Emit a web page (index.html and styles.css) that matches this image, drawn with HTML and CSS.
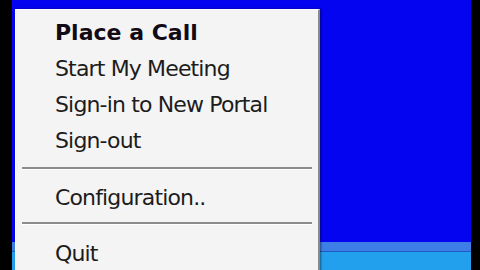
FILE: index.html
```html
<!DOCTYPE html>
<html>
<head>
<meta charset="utf-8">
<link rel="stylesheet" href="styles.css">
</head>
<body>
<div class="screen">
  <div class="desktop">
    <div class="wallpaper"></div>
    <div class="taskbar">
      <div class="tb-top"></div>
      <div class="tb-line"></div>
      <div class="tb-main"></div>
    </div>
  </div>
  <div class="menu">
    <div class="item bold">Place a Call</div>
    <div class="item">Start My Meeting</div>
    <div class="item">Sign-in to New Portal</div>
    <div class="item">Sign-out</div>
    <div class="sep"></div>
    <div class="item">Configuration..</div>
    <div class="sep sep2"></div>
    <div class="item">Quit</div>
  </div>
</div>
</body>
</html>
```

FILE: styles.css
```css
html, body {
  margin: 0;
  padding: 0;
  background: #000;
}
.screen {
  position: relative;
  width: 480px;
  height: 270px;
  overflow: hidden;
  background: #000;
}
.desktop {
  margin-left: 12px;
  width: 459px;
  height: 270px;
  display: flex;
  flex-direction: column;
}
.wallpaper {
  flex: 1;
  background: #0404f0;
}
.taskbar {
  height: 28px;
  display: flex;
  flex-direction: column;
}
.tb-top {
  height: 9px;
  background: #3c7de6;
}
.tb-line {
  height: 1px;
  background: #1a5cc4;
}
.tb-main {
  flex: 1;
  background: #22a0ee;
}
.menu {
  position: absolute;
  left: 15px;
  top: 9px;
  width: 302px;
  height: 280px;
  background: #f4f4f4;
  border-top: 1px solid #ffffff;
  border-left: 1px solid #ffffff;
  border-right: 2px solid #8a8a8a;
  box-shadow: 1px 0 2px rgba(0, 0, 0, 0.45);
  padding-top: 5px;
  box-sizing: content-box;
  font-family: "DejaVu Sans", Verdana, sans-serif;
  font-size: 22px;
  color: #1c1c1c;
}
.item {
  height: 36px;
  line-height: 36px;
  padding-left: 39px;
  letter-spacing: -0.85px;
  white-space: nowrap;
}
.item.bold {
  font-weight: bold;
  letter-spacing: 0;
  color: #120a14;
}
.sep {
  height: 2px;
  margin: 8px 6px 10px 6px;
  background: #8c8c8c;
  border-bottom: 1px solid #ffffff;
}
.sep2 {
  margin-top: 6px;
  margin-bottom: 11px;
}
```
